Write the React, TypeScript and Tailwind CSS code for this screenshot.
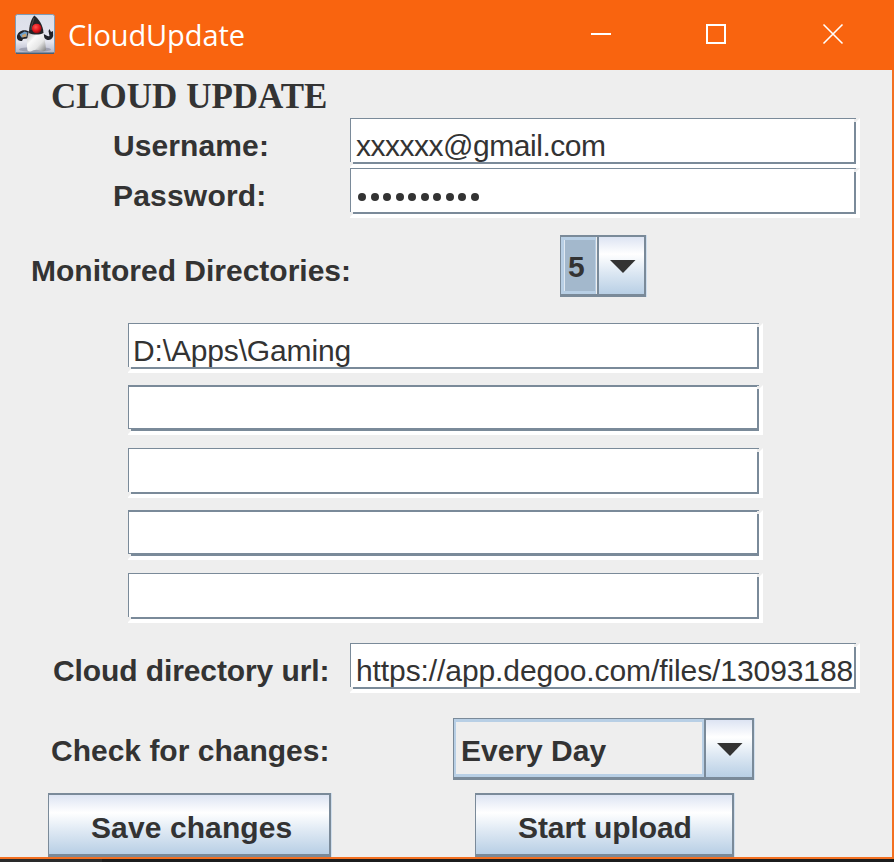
import type { ReactNode } from "react";

function DukeIcon() {
  return (
    <svg width="40" height="40" viewBox="0 0 40 40" className="block">
      <defs>
        <linearGradient id="tile" x1="0" y1="0" x2="0" y2="1">
          <stop offset="0" stopColor="#dcdfe9" />
          <stop offset="0.7" stopColor="#e4e5ee" />
          <stop offset="1" stopColor="#b0b3c6" />
        </linearGradient>
        <linearGradient id="belly" x1="0" y1="0" x2="0.9" y2="1">
          <stop offset="0" stopColor="#9c9c9c" />
          <stop offset="0.4" stopColor="#fafafa" />
          <stop offset="0.7" stopColor="#e6e6e6" />
          <stop offset="1" stopColor="#8b8b8b" />
        </linearGradient>
        <radialGradient id="nose" cx="0.4" cy="0.35" r="0.65">
          <stop offset="0" stopColor="#ff5550" />
          <stop offset="0.6" stopColor="#e3181d" />
          <stop offset="1" stopColor="#8c0d12" />
        </radialGradient>
      </defs>
      <rect x="0.5" y="0.5" width="39" height="39" rx="2" fill="url(#tile)" stroke="#7f9bb5" />
      <path d="M1 39.3h38" stroke="#466079" strokeWidth="1.4" />
      <ellipse cx="20" cy="35.5" rx="16" ry="2.4" fill="#85889a" opacity="0.6" />
      <path d="M15 18C9 14 3 17 2 22c-.5 4 2 5 5 5l1-2c3 0 5-1 7-2z" fill="#202228" />
      <path d="M4.5 20.500l5-3 3 1-1 4-5 1z" fill="#6d9fcb" />
      <path d="M7 21l4-1.500.5 3-4 1z" fill="#c9a16b" />
      <path d="M28.500 20c3 1 4.500 3 6 2l-1-5 1-2 1.500 3 2-1 .2 5c-1.500 5-6 5-9 2z" fill="#202228" />
      <path d="M14 17c4-2 11-2 14 1 1.500 5 2.500 12 3 18-1.500 1.800-5 1.500-6.500.3-2-.8-4-.8-6 0-2 1.500-4.500 1.500-6 .2C11.500 30 12 22 14 17z" fill="url(#belly)" />
      <path d="M14 19C14 12 16 5 19.300 1.500c5 4 8.700 9.500 9.200 17.500-4 2-10.500 2-14.500 0z" fill="#242528" />
      <path d="M19 4c-1 4-3 8-3 12" stroke="#5c5e62" strokeWidth="1" fill="none" opacity="0.7" />
      <circle cx="21.700" cy="14.500" r="4.800" fill="url(#nose)" />
    </svg>
  );
}

function TitleBar() {
  return (
    <header className="flex h-[70px] items-center bg-[#f9640f] pl-[15px] text-white">
      <div className="-mt-0.5">
        <DukeIcon />
      </div>
      <h1 className="ml-[13px] w-[523px] shrink-0 whitespace-nowrap font-['Open_Sans',sans-serif] text-[29px] leading-[70px] tracking-[-0.1px]">
        CloudUpdate
      </h1>
      <div className="flex shrink-0 items-center pb-0.5">
        <svg width="254" height="22" viewBox="0 0 254 22" fill="none" stroke="white">
          <path d="M0 11h20" strokeWidth="2" />
          <rect x="116" y="2" width="18" height="18" strokeWidth="2" />
          <path d="M232.500 1.500l19 19M251.500 1.500l-19 19" strokeWidth="1.600" />
        </svg>
      </div>
    </header>
  );
}

type FieldProps = { children?: ReactNode; wide?: boolean; heavy?: boolean };

function TextField({ children, wide, heavy }: FieldProps) {
  return (
    <div
      className={`relative h-[50px] shrink-0 overflow-hidden bg-white ${wide ? "w-[635px]" : "w-[510px]"}`}
    >
      <div
        className={`h-[46px] overflow-hidden whitespace-nowrap border-r-2 border-l border-[#7a8a99] bg-white leading-[54px] ${
          wide ? "w-[631px] pl-1" : "w-[506px] pl-[5px]"
        } ${heavy ? "border-t-2 border-b-[3px]" : "border-t border-b-2"}`}
      >
        {children}
      </div>
      <svg className="absolute right-0 top-0" width="6" height="5" viewBox="0 0 6 5">
        <path d="M2 0h4L2 4H0V1h2z" fill="#eeeeee" />
      </svg>
      <svg className="absolute bottom-0 left-0" width="4" height="6" viewBox="0 0 4 6">
        <path d="M0 0h3v2L0 5z" fill="#eeeeee" />
      </svg>
    </div>
  );
}

const metal = "bg-[linear-gradient(180deg,#dde4f3_0%,#ffffff_30%,#dde8f3_62%,#b8cfe5_100%)]";

function Arrow() {
  return (
    <svg width="26" height="13" viewBox="0 0 26 13" className="relative left-px top-px">
      <path d="M0 0h25.500L13 13z" fill="#333333" />
    </svg>
  );
}

function MetalButton({ label, width }: { label: string; width: string }) {
  return (
    <button
      className={`block h-16 shrink-0 whitespace-nowrap border-t-2 border-r-2 border-b-[3px] border-l border-[#7a8a99] text-left leading-[66px] shadow-[1px_0_0_#cfdeed] ${metal} ${width}`}
    >
      {label}
    </button>
  );
}

export default function App() {
  return (
    <div className="flex h-[862px] w-[894px] flex-col overflow-hidden bg-[#eeeeee] font-['Liberation_Sans',Arial,sans-serif] text-[30px] text-[#333333]">
      <TitleBar />
      <main className="h-[787px] border-r-2 border-[#f37021]">
        <h2 className="h-12 whitespace-nowrap pl-[51px] font-['Liberation_Serif',serif] text-[35px] font-bold leading-[53px]">
          CLOUD UPDATE
        </h2>
        <div className="flex h-[50px]">
          <label className="w-[350px] pl-[113px] font-bold leading-[55px] tracking-[0.1px]">Username:</label>
          <TextField>
            <span className="tracking-[-0.48px]">xxxxxx@gmail.com</span>
          </TextField>
        </div>
        <div className="flex h-[50px]">
          <label className="w-[350px] pl-[113px] font-bold leading-[55px] tracking-[0.2px]">Password:</label>
          <TextField>
            <span className="flex h-full items-center gap-[4.5px] pl-[2px] pt-[12px]">
              {Array.from({ length: 10 }, (_, i) => (
                <i key={i} className="size-[8px] rounded-full bg-[#333333]" />
              ))}
            </span>
          </TextField>
        </div>

        <div className="mt-[17px] flex h-[62px]">
          <label className="w-[560px] pl-[31px] font-bold leading-[71px]">Monitored Directories:</label>
          <div className="flex w-[86px] border-t-2 border-r-2 border-b-[3px] border-l border-[#7a8a99] bg-[#b8cfe5] font-bold shadow-[1px_0_0_#cfdeed]">
            <div className="my-[3px] ml-[3px] w-[31px] border-l border-[#dfe8f1] bg-[#a3b8cc] pl-[3px] leading-[54px]">5</div>
            <div className="ml-px w-px bg-[#eeeeee]" />
            <div className={`flex flex-1 items-center justify-center border-l-2 border-[#7a8a99] ${metal}`}>
              <Arrow />
            </div>
          </div>
        </div>

        <div className="mt-[26px] flex flex-col pl-[128px]">
          <TextField wide>
            <span className="tracking-[-0.15px]">D:\Apps\Gaming</span>
          </TextField>
          <div className="mt-3">
            <TextField wide heavy />
          </div>
          <div className="mt-[13px]">
            <TextField wide />
          </div>
          <div className="mt-3">
            <TextField wide heavy />
          </div>
          <div className="mt-[13px]">
            <TextField wide />
          </div>
        </div>

        <div className="mt-5 flex h-[50px]">
          <label className="w-[350px] pl-[53px] font-bold leading-[55px] tracking-[-0.1px]">Cloud directory url:</label>
          <TextField>
            <span className="tracking-[-0.09px]">https://app.degoo.com/files/13093188</span>
          </TextField>
        </div>

        <div className="mt-[25px] flex h-[62px]">
          <label className="w-[453px] pl-[51px] font-bold leading-[65px]">Check for changes:</label>
          <div className="flex w-[301px] border-t border-r-2 border-b-[3px] border-l border-[#7a8a99] font-bold shadow-[1px_0_0_#cfdeed]">
            <div className="w-[250px] border-t-[3px] border-r-2 border-b-[3px] border-l-2 border-[#b8cfe5] pl-[5px] leading-[57px]">
              Every Day
            </div>
            <div className={`flex flex-1 items-center justify-center border-t border-l-2 border-[#7a8a99] ${metal}`}>
              <Arrow />
            </div>
          </div>
        </div>

        <div className="mt-[13px] flex pl-12 font-bold">
          <MetalButton label="Save changes" width="w-[283px] pl-[42px] tracking-[0.1px]" />
          <div className="w-36" />
          <MetalButton label="Start upload" width="w-[259px] pl-[42px] tracking-[-0.1px]" />
        </div>
      </main>
      <div className="h-0.5 bg-[#f37021]" />
      <div className="flex h-[3px] bg-[#1c1c1c]">
        <div className="w-[102px] bg-[#2a2a2a]" />
      </div>
    </div>
  );
}
